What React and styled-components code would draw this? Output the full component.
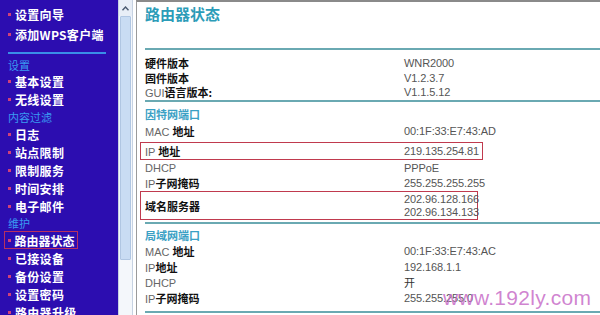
import React from "react";
import styled, { createGlobalStyle } from "styled-components";

const Global = createGlobalStyle`
  html, body { margin: 0; padding: 0; background: #ffffff; }
  body { width: 600px; height: 315px; overflow: hidden; font-family: "Liberation Sans", "Noto Sans CJK SC", sans-serif; }
  #root { width: 600px; height: 315px; }
`;

const Page = styled.div`
  position: relative;
  display: flex;
  width: 600px;
  height: 315px;
  overflow: hidden;
  background: #fff;
`;

const Sidebar = styled.nav`
  width: 118px;
  flex: none;
  background: #2c0db0;
  padding-top: 4px;
  box-sizing: border-box;
  display: flex;
  flex-direction: column;
  font-family: "Noto Sans CJK SC", sans-serif;
`;

const NavItem = styled.div`
  height: ${(p) => p.$h || 18}px;
  flex: none;
  display: flex;
  align-items: center;
  gap: 4px;
  padding-left: 8px;
  color: #ffffff;
  font-size: 12px;
  font-weight: 700;
  letter-spacing: 0.3px;
  white-space: nowrap;
  box-sizing: border-box;
  &::before {
    content: "";
    width: 3px;
    height: 3px;
    background: #d0407a;
    flex: none;
  }
`;

const ActiveBox = styled.div`
  margin-left: 4px;
  width: 74px;
  height: 18px;
  flex: none;
  box-sizing: border-box;
  border: 1.5px solid #b83060;
  display: flex;
  align-items: center;
  ${NavItem} { padding-left: 2.5px; height: 15px; letter-spacing: 0; }
`;

const NavHeader = styled.div`
  height: ${(p) => p.$h || 16}px;
  flex: none;
  display: flex;
  align-items: center;
  padding-left: 8px;
  color: #3a9af2;
  font-size: 11px;
  box-sizing: border-box;
`;

const NavDivider = styled.div`
  height: 2px;
  flex: none;
  margin: 8px 12px 3px 8px;
  background: #3a8ee8;
`;

const Scrollbar = styled.div`
  width: 15px;
  flex: none;
  background: #f4f7fb;
  border-left: 1px solid #c6d2e2;
  border-right: 1px solid #c6d2e2;
  box-sizing: border-box;
  display: flex;
  flex-direction: column;
`;

const ScrollBtn = styled.div`
  height: 16px;
  display: flex;
  align-items: center;
  justify-content: center;
  background: #e8eef7;
`;

const Thumb = styled.div`
  height: 242px;
  margin: 0 1px;
  background: #c9dcf3;
  border: 1px solid #b0c6e2;
  border-radius: 1px;
`;

const Gap = styled.div`
  width: 3px;
  flex: none;
  background: #fff;
`;

const Content = styled.main`
  flex: 1;
  border-top: 2px solid #8a8a8a;
  border-left: 1px solid #9a9a9a;
  padding-left: 8px;
  box-sizing: border-box;
  display: flex;
  flex-direction: column;
`;

const Title = styled.h1`
  margin: 0;
  height: 46px;
  line-height: 24px;
  font-size: 15px;
  font-weight: 700;
  color: #2c9cb8;
  font-family: "Noto Sans CJK SC", sans-serif;
`;

const Rule = styled.div`
  height: 2px;
  flex: none;
  background: #6aa9b2;
  margin-top: ${(p) => p.$mt || 0}px;
`;

const Section = styled.section`
  padding-top: ${(p) => p.$pt || 0}px;
  display: flex;
  flex-direction: column;
`;

const SectionHead = styled.div`
  height: ${(p) => p.$h || 16}px;
  margin-top: ${(p) => p.$mt || 0}px;
  line-height: ${(p) => p.$h || 16}px;
  font-size: 11px;
  font-weight: 700;
  color: #3aa0c4;
  font-family: "Noto Sans CJK SC", sans-serif;
`;

const Row = styled.div`
  display: grid;
  grid-template-columns: 259px auto;
  align-items: center;
  height: ${(p) => p.$h || 16}px;
  font-size: 11px;
  color: #555;
`;

const Boxed = styled.div`
  margin-left: -5px;
  margin-top: ${(p) => p.$mt || 0}px;
  width: ${(p) => p.$w}px;
  height: ${(p) => p.$h}px;
  padding-left: 4px;
  box-sizing: border-box;
  border: 1.5px solid #c03a4e;
  display: grid;
  grid-template-columns: 259px auto;
  align-items: center;
  font-size: 11px;
  color: #555;
`;

const Label = styled.div`
  color: #666;
  white-space: nowrap;
`;

const Cjk = styled.span`
  font-family: "Noto Sans CJK SC", sans-serif;
  font-weight: ${(p) => (p.$plain ? 400 : 700)};
  color: ${(p) => (p.$plain ? "#333" : "#111")};
`;

const Values = styled.div`
  display: flex;
  flex-direction: column;
`;

const Value = styled.div`
  line-height: ${(p) => p.$lh || 14}px;
  color: #555;
  letter-spacing: -0.1px;
`;

const Watermark = styled.div`
  position: absolute;
  left: 443px;
  top: 286px;
  font-family: "Liberation Sans", sans-serif;
  font-size: 21px;
  color: rgba(200, 110, 200, 0.85);
  letter-spacing: 0.3px;
  pointer-events: none;
`;

const navTop = ["设置向导", "添加WPS客户端"];

export default function App() {
  return (
    <Page>
      <Global />
      <Sidebar>
        {navTop.map((t) => (
          <NavItem key={t} $h={20}>{t}</NavItem>
        ))}
        <NavDivider />
        <NavHeader $h={15}>设置</NavHeader>
        <NavItem>基本设置</NavItem>
        <NavItem>无线设置</NavItem>
        <NavHeader $h={17}>内容过滤</NavHeader>
        <NavItem>日志</NavItem>
        <NavItem>站点限制</NavItem>
        <NavItem>限制服务</NavItem>
        <NavItem>时间安排</NavItem>
        <NavItem>电子邮件</NavItem>
        <NavHeader $h={16}>维护</NavHeader>
        <ActiveBox>
          <NavItem>路由器状态</NavItem>
        </ActiveBox>
        <NavItem>已接设备</NavItem>
        <NavItem>备份设置</NavItem>
        <NavItem>设置密码</NavItem>
        <NavItem>路由器升级</NavItem>
      </Sidebar>
      <Scrollbar>
        <ScrollBtn>
          <svg width="7" height="5" viewBox="0 0 7 5">
            <path d="M0.5 4.2 L3.5 1 L6.5 4.2" fill="none" stroke="#4a5a70" strokeWidth="1.4" />
          </svg>
        </ScrollBtn>
        <Thumb />
      </Scrollbar>
      <Gap />
      <Content>
        <Title>路由器状态</Title>
        <Rule />
        <Section $pt={5}>
          <Row $h={14.5}><Label><Cjk>硬件版本</Cjk></Label><Value>WNR2000</Value></Row>
          <Row $h={14.5}><Label><Cjk>固件版本</Cjk></Label><Value>V1.2.3.7</Value></Row>
          <Row $h={14.5}><Label>GUI<Cjk>语言版本:</Cjk></Label><Value>V1.1.5.12</Value></Row>
        </Section>
        <Rule $mt={1.5} />
        <Section>
          <SectionHead $mt={4} $h={16}>因特网端口</SectionHead>
          <Row $h={18}><Label>MAC <Cjk>地址</Cjk></Label><Value>00:1F:33:E7:43:AD</Value></Row>
          <Boxed $w={343} $h={18} $mt={2}>
            <Label>IP <Cjk>地址</Cjk></Label>
            <Value>219.135.254.81</Value>
          </Boxed>
          <Row $h={15}><Label>DHCP</Label><Value>PPPoE</Value></Row>
          <Row $h={16}><Label>IP<Cjk>子网掩码</Cjk></Label><Value>255.255.255.255</Value></Row>
          <Boxed $w={338} $h={29}>
            <Label><Cjk>域名服务器</Cjk></Label>
            <Values>
              <Value $lh={13}>202.96.128.166</Value>
              <Value $lh={13}>202.96.134.133</Value>
            </Values>
          </Boxed>
        </Section>
        <Rule $mt={2} />
        <Section>
          <SectionHead $mt={3} $h={16}>局域网端口</SectionHead>
          <Row $h={16}><Label>MAC <Cjk>地址</Cjk></Label><Value>00:1F:33:E7:43:AC</Value></Row>
          <Row $h={16}><Label>IP<Cjk>地址</Cjk></Label><Value>192.168.1.1</Value></Row>
          <Row $h={15}><Label>DHCP</Label><Value><Cjk $plain>开</Cjk></Value></Row>
          <Row $h={16}><Label>IP<Cjk>子网掩码</Cjk></Label><Value>255.255.255.0</Value></Row>
        </Section>
        <Rule $mt={5} />
      </Content>
      <Watermark>www.192ly.com</Watermark>
    </Page>
  );
}
